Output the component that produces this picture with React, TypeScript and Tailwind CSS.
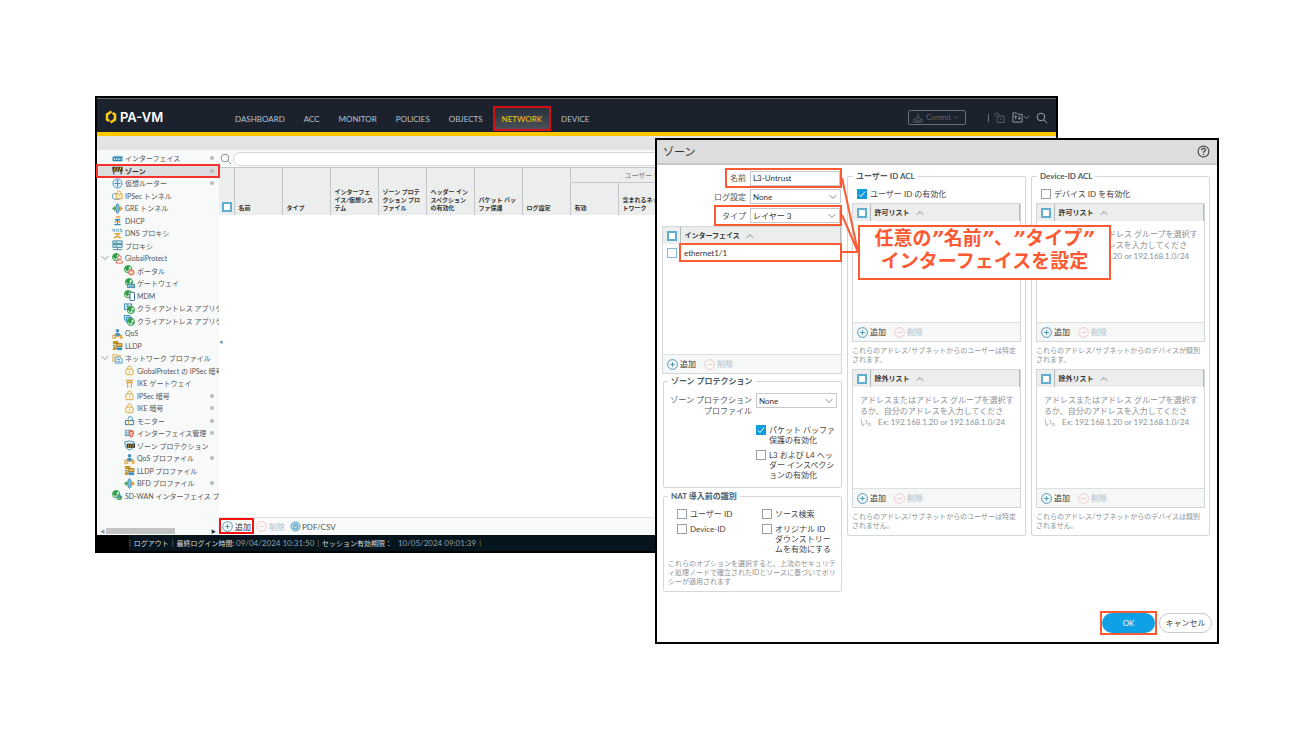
import React from "react";
import { ChevronDown, ChevronUp } from "lucide-react";

const Globe = ({ x = 0, y = 0 }: { x?: number; y?: number }) => (
  <g transform={`translate(${x} ${y})`}>
    <circle cx="4.500" cy="4.500" r="4" fill="#d6efdc" stroke="#2c9a47" strokeWidth="1" />
    <path d="M1 4c0-3 4-4 5.500-2.500L5 3l.5 1.500L3.500 7 2 5z M6 5l2-1c0 2-1 3-2 3.500z" fill="#2c9a47" />
  </g>
);

const Person = ({ color }: { color: string }) => (
  <g fill={color}>
    <circle cx="6" cy="3" r="2" />
    <path d="M2.500 9c0-5 7-5 7 0z" />
  </g>
);

const Padlock = () => (
  <g fill="none" stroke="#dba63a" strokeWidth="1">
    <rect x="2" y="4.500" width="8" height="6" rx="1" fill="#fff6df" />
    <path d="M4 4.500V3a2 2 0 0 1 4 0v1.500" />
    <path d="M6 6.500v2" />
  </g>
);

const icons: Record<string, React.ReactNode> = {
  interface: (
    <g>
      <path d="M2.500 3h8L12 5H1z" fill="#8cc6df" />
      <rect x=".5" y="4" width="11" height="5" rx="1" fill="#2f86b0" />
      <path d="M2 6.500h1.500M4.500 6.500H6M7 6.500h1.500M9.500 6.500h1" stroke="#fff" strokeWidth="1.500" />
    </g>
  ),
  zone: (
    <g>
      <path d="M2 6v4M10 6v4" stroke="#555" strokeWidth="1.500" />
      <rect x=".5" y="2" width="11" height="5" fill="#2b2b2b" />
      <path d="M2 6.500l2-4M5 6.500l2-4M8 6.500l2-4" stroke="#e7b928" strokeWidth="1.200" />
    </g>
  ),
  router: (
    <g fill="none" stroke="#3e8fb3" strokeWidth="1">
      <circle cx="6" cy="6" r="5" fill="#e6f3f9" />
      <path d="M6 2.500v7M2.500 6h7" />
      <path d="M4.800 3.700L6 2.500l1.200 1.200M4.800 8.300L6 9.500l1.200-1.200" />
    </g>
  ),
  ipsec: (
    <g fill="none" strokeWidth="1">
      <path d="M5 4H2L.5 5.500v3L2 10h7" stroke="#4f93b4" />
      <rect x="4.500" y="4.500" width="6.500" height="5" fill="#fff4d7" stroke="#dba63a" />
      <path d="M5.500 4.500V3a2 2 0 0 1 4 0v1.500M7.500 6v1.500" stroke="#dba63a" />
    </g>
  ),
  gre: (
    <g>
      <path d="M0 6l3-3v2h2v2H3v2z" fill="#54a860" />
      <path d="M12 6L9 3v2H7v2h2v2z" fill="#e0a83b" />
      <ellipse cx="6" cy="6" rx="1.800" ry="5.200" fill="#8fc7df" stroke="#2f7f9f" />
    </g>
  ),
  dhcp: (
    <g fill="none" strokeWidth="1.200">
      <path d="M4 2h5M6.500 2v2" stroke="#e1a33a" />
      <path d="M3 5h6M6 5v5M3 8l3-2 3 2M2.500 10.500h7" stroke="#408bb0" />
      <path d="M4 7h4" stroke="#e1a33a" />
    </g>
  ),
  dns: (
    <g fill="none" strokeWidth="1.200">
      <path d="M1 4V1l2 3V1M5 4V1l2 3V1M11 1H9v1.500h2V4H8.500" stroke="#62a5c4" strokeWidth=".8" />
      <path d="M3 5.500l6 5M9 5.500l-6 5M3 6h6M2 10.500h3M7 10.500h3" stroke="#e1a33a" />
    </g>
  ),
  proxy: (
    <g fill="#d9edf4" stroke="#3d87a6" strokeWidth="1">
      <rect x="1" y="1" width="10" height="3" />
      <rect x="1" y="5" width="10" height="3" />
      <path d="M6 8v2.500M1 10.500h10" />
      <path d="M3 2.500h3M3 6.500h3" stroke="#55a867" />
    </g>
  ),
  gp: (
    <g>
      <Globe />
      <g fill="#fff" stroke="#e4604d" strokeWidth="1">
        <circle cx="8" cy="5" r="2" />
        <path d="M4.500 11c0-4.500 7-4.500 7 0z" />
      </g>
    </g>
  ),
  portal: (
    <g>
      <Globe />
      <circle cx="8" cy="8" r="3" fill="#f39a83" stroke="#df6a52" />
      <path d="M6 8h4M8 6v4" stroke="#fff" strokeWidth=".8" />
    </g>
  ),
  gateway: (
    <g>
      <Globe x={1} />
      <rect x="4" y="7" width="7.500" height="3.500" fill="#a9d2e5" stroke="#3d87a6" />
      <path d="M5.500 9h1M7.500 9h1M9.500 9h1" stroke="#1e6788" />
    </g>
  ),
  mdm: (
    <g>
      <Globe />
      <rect x="6.500" y="2.500" width="5" height="9" rx="1" fill="#fff" stroke="#245c86" />
    </g>
  ),
  app1: (
    <g>
      <rect x=".5" y="1" width="8" height="6" fill="#d9edf7" stroke="#3c8fbd" />
      <path d="M2 3.500h5M4 1v6" stroke="#3c8fbd" strokeWidth=".8" />
      <Globe x={3} y={3} />
    </g>
  ),
  app2: (
    <g>
      <rect x=".5" y=".5" width="6" height="5" fill="#d9edf7" stroke="#3c8fbd" />
      <rect x="2.500" y="2.500" width="6" height="5" fill="#9bcbe2" stroke="#3c8fbd" />
      <Globe x={3} y={3} />
    </g>
  ),
  qos: (
    <g>
      <Person color="#4793c1" />
      <path d="M1 8h3v3H1zM5 9.500h2.500M11 8H9v1.500h2V11H8.500" fill="none" stroke="#e1a33a" strokeWidth="1.200" />
    </g>
  ),
  lldp: (
    <g>
      <rect x="1" y="1" width="6" height="3.500" fill="#c8951f" />
      <rect x="4.500" y="4" width="6.500" height="3" fill="#e0b74d" stroke="#8a6c1e" strokeWidth=".8" />
      <path d="M1 6h2v3h3" fill="none" stroke="#8a6c1e" />
      <rect x="5" y="8" width="6" height="3" fill="#3c8fbd" />
      <rect x="1" y="8" width="3" height="3" fill="#c8951f" />
    </g>
  ),
  netprofile: (
    <g fill="#fff" strokeWidth="1">
      <path d="M1 10V1.500h3l1 1h4V5" stroke="#dba63a" fill="#fdf0cf" />
      <path d="M3.500 4.500h5l2.500 2V11H3.500z" stroke="#3c8fbd" />
      <path d="M5 7h4M5 9h4" stroke="#3c8fbd" />
    </g>
  ),
  padlock: <Padlock />,
  ikegw: <path d="M1.500 2.500h9M2.500 5h7M4 2.500V11M8 2.500V11M6 2.500V5" fill="none" stroke="#dba63a" strokeWidth="1.200" />,
  monitor: (
    <g fill="none" strokeWidth="1">
      <path d="M4.500 5V3.500a2.300 2.300 0 0 1 4.500 0V10" stroke="#3c8fbd" />
      <path d="M1.500 6h9v4.500h-9z" stroke="#3a7593" fill="#e6f3f9" />
      <path d="M5 6v4.500" stroke="#dba63a" />
    </g>
  ),
  mgmt: (
    <g>
      <path d="M1 2h7v7H1z" fill="#6eaed0" />
      <path d="M2.500 4h4M2.500 6h4" stroke="#fff" />
      <path d="M5 3.500l3-1.500 3 1.500c.5 4-1 6-3 7-2-1-3.500-3-3-7z" fill="#e2654e" />
      <path d="M6 5h4M6 7h4M8 4v5" stroke="#fff" strokeWidth=".6" />
    </g>
  ),
  shield: (
    <g>
      <path d="M1 2l5-1 5 1c.5 5-2 8-5 9-3-1-5.500-4-5-9z" fill="#e6f3f9" stroke="#3c8fbd" />
      <rect x="3" y="4" width="9" height="4.500" fill="#2b2b2b" />
      <path d="M4.500 8l1-3.500M7 8l1-3.500M9.500 8l1-3.500" stroke="#c9a436" />
    </g>
  ),
  sdwan: (
    <g>
      <Globe />
      <path d="M5 7h5M7.500 5l3 2.500-3 3M5 10h4" fill="none" stroke="#3c8fbd" strokeWidth="1.200" />
      <circle cx="9" cy="9" r="2" fill="#54a860" />
    </g>
  ),
};

type MenuItem = { icon: string; label: string; level?: number; dot?: boolean; open?: boolean; active?: boolean };

const menu: MenuItem[] = [
  { icon: "interface", label: "インターフェイス", dot: true },
  { icon: "zone", label: "ゾーン", dot: true, active: true },
  { icon: "router", label: "仮想ルーター", dot: true },
  { icon: "ipsec", label: "IPSec トンネル" },
  { icon: "gre", label: "GRE トンネル" },
  { icon: "dhcp", label: "DHCP" },
  { icon: "dns", label: "DNS プロキシ" },
  { icon: "proxy", label: "プロキシ" },
  { icon: "gp", label: "GlobalProtect", open: true },
  { icon: "portal", label: "ポータル", level: 2 },
  { icon: "gateway", label: "ゲートウェイ", level: 2 },
  { icon: "mdm", label: "MDM", level: 2 },
  { icon: "app1", label: "クライアントレス アプリケ", level: 2 },
  { icon: "app2", label: "クライアントレス アプリケ", level: 2 },
  { icon: "qos", label: "QoS" },
  { icon: "lldp", label: "LLDP" },
  { icon: "netprofile", label: "ネットワーク プロファイル", open: true },
  { icon: "padlock", label: "GlobalProtect の IPSec 暗号", level: 2 },
  { icon: "ikegw", label: "IKE ゲートウェイ", level: 2 },
  { icon: "padlock", label: "IPSec 暗号", level: 2, dot: true },
  { icon: "padlock", label: "IKE 暗号", level: 2, dot: true },
  { icon: "monitor", label: "モニター", level: 2, dot: true },
  { icon: "mgmt", label: "インターフェイス管理", level: 2, dot: true },
  { icon: "shield", label: "ゾーン プロテクション", level: 2 },
  { icon: "qos", label: "QoS プロファイル", level: 2, dot: true },
  { icon: "lldp", label: "LLDP プロファイル", level: 2 },
  { icon: "gre", label: "BFD プロファイル", level: 2, dot: true },
  { icon: "sdwan", label: "SD-WAN インターフェイス プ" },
];

const tabs = ["DASHBOARD", "ACC", "MONITOR", "POLICIES", "OBJECTS", "NETWORK", "DEVICE"];

const SearchIcon = ({ className }: { className: string }) => (
  <svg viewBox="0 0 12 12" className={className} fill="none" stroke="currentColor">
    <circle cx="5" cy="5" r="3.800" />
    <path d="M8 8l3.200 3.200" />
  </svg>
);

const AddDelete = ({ className = "gap-2" }: { className?: string }) => (
  <div className={`flex items-center ${className}`}>
    <button type="button" className="flex items-center gap-[2px] text-[#333]">
      <svg viewBox="0 0 12 12" className="h-[11px] w-[11px]" fill="none" stroke="#3d8fb5">
        <circle cx="6" cy="6" r="5.300" />
        <path d="M3.500 6h5M6 3.500v5" />
      </svg>
      追加
    </button>
    <button type="button" disabled className="flex items-center gap-[2px] text-[#b5b8ba]">
      <svg viewBox="0 0 12 12" className="h-[11px] w-[11px]" fill="none" stroke="#f2c3c3">
        <circle cx="6" cy="6" r="5.300" />
        <path d="M3.500 6h5" />
      </svg>
      削除
    </button>
  </div>
);

const Check = ({ children, checked = false, className = "" }: { children: React.ReactNode; checked?: boolean; className?: string }) => (
  <label className={`flex items-start gap-[3px] text-[#444] ${className}`}>
    <span className="relative h-[10px] w-[10px] shrink-0">
      <input
        type="checkbox"
        defaultChecked={checked}
        className="peer block h-[10px] w-[10px] appearance-none border border-[#999fa3] bg-white checked:border-[#109bdc] checked:bg-[#109bdc]"
      />
      <svg viewBox="0 0 10 10" className="pointer-events-none absolute inset-0 hidden peer-checked:block" fill="none" stroke="#fff">
        <path d="M2 5.500l2 2 4-5" />
      </svg>
    </span>
    <span>{children}</span>
  </label>
);

const GridCheck = ({ label, light = false }: { label: string; light?: boolean }) => (
  <input
    type="checkbox"
    aria-label={label}
    className={`block h-[10px] w-[10px] appearance-none bg-white ${light ? "border border-[#7fbbd6]" : "border-2 border-[#5fadd0]"}`}
  />
);

const Sidebar = () => (
  <nav className="flex w-[122px] shrink-0 flex-col bg-[#f8f9f9] pt-[2px] text-[7px] leading-[12px] text-[#555]">
    <ul className="flex h-[350px] flex-col">
      {menu.map((item, i) => (
        <li key={i} className={`relative flex flex-1 items-center ${item.active ? "bg-[#dcddde] font-bold text-[#222]" : ""}`}>
          <span className="flex w-[15px] shrink-0 justify-center">
            {item.open && <ChevronDown className="h-3 w-3 shrink-0 text-[#999]" />}
          </span>
          <a href="#" className={`flex min-w-0 flex-1 items-center gap-[2px] ${item.level === 2 ? "pl-3" : ""}`}>
            <svg viewBox="0 0 12 12" className="h-[11px] w-[11px] shrink-0">
              {icons[item.icon]}
            </svg>
            <span className="overflow-hidden whitespace-nowrap">{item.label}</span>
          </a>
          {item.dot && <span className="mr-[5px] h-1 w-1 shrink-0 rounded-full bg-[#bbb]"></span>}
          {item.active && <span className="absolute inset-y-[-1px] -right-px -left-px z-10 border-2 border-[#f5312d]"></span>}
        </li>
      ))}
    </ul>
    <div className="mt-auto mb-px flex h-[6px] items-center justify-between px-[3px] text-[5px] leading-[6px] text-[#333]">
      <span className="text-[#999]">◀</span>
      <span className="mr-auto ml-px h-[6px] w-[69px] bg-[#c4c4c4]"></span>
      <span>▶</span>
    </div>
  </nav>
);

const headCell = "border-l border-[#c3c7c9] px-1 pb-[3px] text-left align-bottom font-bold";

const ZoneTable = () => (
  <table className="w-full table-fixed border-t border-[#c3c7c9] bg-[#eceeee] text-[6px] leading-[8px] text-[#333]">
    <colgroup>
      <col className="w-[15px]" />
      {[...Array(8)].map((_, i) => (
        <col key={i} className="w-12" />
      ))}
      <col className="w-12" />
      <col />
    </colgroup>
    <thead>
      <tr className="h-[15px]">
        <th rowSpan={2} className="pb-[3px] pl-[3px] align-bottom">
          <GridCheck label="すべて選択" />
        </th>
        <th rowSpan={2} className={headCell}>名前</th>
        <th rowSpan={2} className={headCell}>タイプ</th>
        <th rowSpan={2} className={headCell}>インターフェ<br />イス/仮想シス<br />テム</th>
        <th rowSpan={2} className={headCell}>ゾーン プロテ<br />クション プロ<br />ファイル</th>
        <th rowSpan={2} className={headCell}>ヘッダー イン<br />スペクション<br />の有効化</th>
        <th rowSpan={2} className={headCell}>パケット バッ<br />ファ保護</th>
        <th rowSpan={2} className={headCell}>ログ設定</th>
        <th colSpan={3} className="border-b border-l border-[#c3c7c9] pl-[54px] text-left text-[7px] font-normal text-[#777]">
          ユーザー ID
        </th>
      </tr>
      <tr className="h-8">
        <th className={headCell}>有効</th>
        <th className={headCell}>含まれるネッ<br />トワーク</th>
        <th className={headCell}>除外されるネットワーク</th>
      </tr>
    </thead>
  </table>
);

const MainWindow = () => (
  <div className="mr-[161px] border-2 border-black bg-white">
    <header className="flex h-[38px] items-stretch border-t border-b-4 border-t-[#666c72] border-b-[#ffc800] bg-[#1b222e]">
      <div className="flex w-[129px] items-center gap-[3px] pt-[3px] pl-2">
        <svg viewBox="0 0 24 28" className="h-[14px] w-3" fill="none" stroke="#fecb1b" strokeWidth="5">
          <path d="M13 3L4 9v10l5 3" />
          <path d="M11 25l9-6V9l-5-3" />
        </svg>
        <span className="font-[Inter] text-[13px] leading-4 font-semibold text-white">PA-VM</span>
      </div>
      <nav className="flex gap-px pt-[7px] pb-px text-[8px] text-[#b5c3ce]">
        {tabs.map((tab) => (
          <a
            key={tab}
            href="#"
            className={
              tab === "NETWORK"
                ? "flex items-center border-2 border-[#d40f14] bg-linear-to-b from-[#27313c] to-[#4a5057] px-[7px] font-medium text-[#f5bd19]"
                : "flex items-center px-[9px]"
            }
          >
            {tab}
          </a>
        ))}
      </nav>
      <div className="ml-auto flex items-center pt-1 pr-2 text-[#7c848b]">
        <button type="button" className="mr-[22px] flex h-[15px] w-[58px] items-center justify-center gap-[3px] rounded-xs border border-[#687078] text-[7px] text-[#626b74]">
          <svg viewBox="0 0 12 12" className="h-[10px] w-[10px]" fill="none" stroke="currentColor">
            <path d="M6 1v6M4 5l2 2 2-2M1 7.500h3M8 7.500h3v3.500H1V7.500M3 9.500h6" />
          </svg>
          Commit
          <ChevronDown className="-ml-[2px] h-[9px] w-[9px]" />
        </button>
        <span className="mr-[5px] h-2 w-px bg-[#6b737b]"></span>
        <svg viewBox="0 0 12 12" className="mr-[7px] h-[11px] w-[11px] text-[#59636c]" fill="none" stroke="currentColor">
          <path d="M1 5V3a2 2 0 0 1 4 0v2M3.500 4.500h7.500v7H3.500zM7 7v2" />
        </svg>
        <svg viewBox="0 0 12 12" className="h-[11px] w-[11px] text-[#9ca3a8]" fill="none" stroke="currentColor">
          <path d="M1 1h4l1.500 1.500H11V11H1zM4 4v4M2.500 5.500L4 4l1.500 1.500M8 8V4.500M6.500 6.500L8 8l1.500-1.500" />
        </svg>
        <ChevronDown className="mr-[5px] -ml-px h-[9px] w-[9px] text-[#9ca3a8]" />
        <SearchIcon className="h-3 w-3 text-[#9ca3a8]" />
      </div>
    </header>
    <div className="h-[14px] bg-[#e2e4e6]"></div>
    <div className="flex h-[385px]">
      <Sidebar />
      <main className="relative flex min-w-0 flex-1 flex-col">
        <div className="flex h-[17px] items-center gap-px bg-[#f8f9f9] px-px">
          <SearchIcon className="h-3 w-3 shrink-0 text-[#8a9197]" />
          <input aria-label="検索" className="h-[14px] min-w-0 flex-1 rounded-full border border-[#d4d8da] bg-white px-2 text-[8px]" />
        </div>
        <ZoneTable />
        <button type="button" aria-label="折りたたむ" className="absolute top-[190px] left-0 text-[4px] text-[#888]">◀</button>
        <div className="mt-auto flex h-[18px] items-center gap-[5px] border-t border-[#e0e3e4] bg-[#f9fbfb] pl-[3px] text-[8px] leading-[10px] text-[#555]">
          <div className="relative">
            <AddDelete className="gap-[5px]" />
            <span className="absolute -top-[3px] -left-[3px] h-4 w-[35px] border-2 border-[#f5110e]"></span>
          </div>
          <button type="button" className="flex items-center gap-px">
            <svg viewBox="0 0 12 12" className="h-[11px] w-[11px]" fill="none" stroke="#4f9fc4">
              <circle cx="6" cy="6" r="5" fill="#b8dcec" />
              <path d="M4 3.500h4v5H4zM5 5.500h2" />
            </svg>
            PDF/CSV
          </button>
        </div>
      </main>
    </div>
    <footer className="flex h-4 bg-black pl-8 text-[7px] leading-4 text-[#d8dcdf]">
      <div className="flex flex-1 gap-[3px] bg-[#06141d] whitespace-pre">
        <span className="text-[#7f8990]">|</span>
        <a href="#">ログアウト</a>
        <span className="text-[#7f8990]">|</span>
        <span>
          最終ログイン時間: <span className="text-[8px] text-[#94a0a8]">09/04/2024 10:31:50</span>
        </span>
        <span className="text-[#7f8990]">|</span>
        <span className="flex gap-1">
          セッション有効期限： <span className="text-[8px] text-[#94a0a8]">10/05/2024 09:01:39</span>
        </span>
        <span className="text-[#7f8990]">|</span>
      </div>
    </footer>
  </div>
);

const Select = ({ id, value, className = "" }: { id: string; value: string; className?: string }) => (
  <div className={`relative ${className}`}>
    <select id={id} className="block h-[15px] w-full appearance-none border border-[#c6cacc] bg-white px-[2px] text-[8px] leading-[10px] text-[#333]">
      <option>{value}</option>
    </select>
    <ChevronDown className="pointer-events-none absolute top-[2px] right-[2px] h-3 w-3 text-[#888]" />
  </div>
);

type ListPanelProps = { title: string; height: string; children?: React.ReactNode };

const ListPanel = ({ title, height, children }: ListPanelProps) => (
  <div className={`flex flex-col border border-[#d3d7d9] ${height}`}>
    <table className="w-full text-[#333]">
      <thead>
        <tr className="h-[17px] bg-[#eceeee]">
          <th className="w-[17px] border-r border-[#b3bbbf] pl-1">
            <GridCheck label={`${title} すべて選択`} />
          </th>
          <th className="border-r border-[#b3bbbf] pl-1 text-left text-[7px] leading-[9px] font-bold">
            <span className="flex items-center gap-1">
              {title}
              <ChevronUp className="h-3 w-3 text-[#888]" />
            </span>
          </th>
        </tr>
      </thead>
      {title === "インターフェイス" && (
        <tbody>
          <tr className="h-[18px]">
            <td className="pl-1">
              <GridCheck label="ethernet1/1" light />
            </td>
            <td className="relative pl-1">
              ethernet1/1
              <span className="absolute -top-px -right-px bottom-0 -left-px border-2 border-[#fb5a32]"></span>
            </td>
          </tr>
        </tbody>
      )}
    </table>
    {children}
    <AddDelete className="mt-auto h-[19px] gap-2 border-t border-[#dde0e1] bg-[#f6f8f8] pl-1" />
  </div>
);

const AclHint = () => (
  <p className="pt-2 pl-[7px] text-[8px] leading-[11px] whitespace-nowrap text-[#8d9295]">
    アドレスまたはアドレス グループを選択す<br />るか、自分のアドレスを入力してくださ<br />い。 Ex: 192.168.1.20 or 192.168.1.0/24
  </p>
);

type AclProps = { title: string; enable: string; checked?: boolean; allow: string; deny: string };

const AclFieldset = ({ title, enable, checked, allow, deny }: AclProps) => (
  <fieldset className="min-w-0 flex-1 self-start rounded-xs border border-[#d3d7d9] px-1 pb-[5px]">
    <legend className="ml-[1px] px-[3px] font-bold text-[#4c5c66]">{title}</legend>
    <Check checked={checked} className="mt-2 mb-1 ml-[5px]">{enable}</Check>
    <ListPanel title="許可リスト" height="h-[139px]">
      {!checked && <AclHint />}
    </ListPanel>
    <p className="mt-1 mb-[5px] text-[7px] leading-[9px] text-[#8d9295]">{allow}<br />されます。</p>
    <ListPanel title="除外リスト" height="h-[139px]">
      <AclHint />
    </ListPanel>
    <p className="mt-1 text-[7px] leading-[9px] text-[#8d9295]">{deny}<br />されません。</p>
  </fieldset>
);

const ZoneDialog = () => (
  <div role="dialog" aria-label="ゾーン" className="absolute top-[42px] right-0 flex h-[506px] w-[564px] flex-col border-2 border-black bg-white text-[8px] leading-[10px]">
    <div className="flex h-[25px] items-center justify-between border-b-2 border-[#c5c9cb] bg-[#dcddde] pr-[7px] pl-[6px]">
      <h2 className="text-[11px] leading-4 text-[#333]">ゾーン</h2>
      <button type="button" aria-label="ヘルプ">
        <svg viewBox="0 0 12 12" className="h-[13px] w-[13px]" fill="none" stroke="#444">
          <circle cx="6" cy="6" r="5" />
          <path d="M4.300 4.800c0-2.300 3.400-2.300 3.400-.2C7.700 5.800 6 5.800 6 7.200M6 8v1.200" strokeWidth="1.200" />
        </svg>
      </button>
    </div>
    <div className="flex gap-[5px] pt-[6px] pr-[7px] pl-[5px]">
      <div className="w-[180px] shrink-0">
        <div className="-mt-[3px] flex flex-col text-[#555]">
          <div className="flex h-5 items-center justify-end self-end border-2 border-[#fb5a32] pl-[3px]">
            <label htmlFor="zone-name" className="mr-1">名前</label>
            <input id="zone-name" defaultValue="L3-Untrust" className="h-[15px] w-[90px] border border-[#c6cacc] px-[2px] text-[#333]" />
          </div>
          <div className="flex h-[17px] items-center justify-end pr-px">
            <label htmlFor="log-setting" className="mr-1">ログ設定</label>
            <Select id="log-setting" value="None" className="w-[91px]" />
          </div>
          <div className="flex h-[21px] items-center justify-end self-end border-2 border-[#fb5a32] pl-[6px]">
            <label htmlFor="zone-type" className="mr-1">タイプ</label>
            <Select id="zone-type" value="レイヤー 3" className="w-[90px]" />
          </div>
        </div>
        <ListPanel title="インターフェイス" height="h-[148px]" />
        <fieldset className="mt-[2px] ml-px h-[112px] rounded-xs border border-[#d3d7d9]">
          <legend className="ml-1 px-[3px] font-bold text-[#4c5c66]">ゾーン プロテクション</legend>
          <div className="mt-[7px] flex gap-1 pr-1 text-[#555]">
            <label htmlFor="protection" className="flex-1 pt-[2px] text-right leading-[11px] whitespace-nowrap">
              ゾーン プロテクション<br />プロファイル
            </label>
            <Select id="protection" value="None" className="w-[81px]" />
          </div>
          <Check checked className="mt-2 ml-[92px] whitespace-nowrap">パケット バッファ<br />保護の有効化</Check>
          <Check className="mt-[5px] ml-[92px] whitespace-nowrap">L3 および L4 ヘッ<br />ダー インスペクシ<br />ョンの有効化</Check>
        </fieldset>
        <fieldset className="mt-[3px] ml-px rounded-xs border border-[#d3d7d9] px-1 pb-[5px]">
          <legend className="px-[3px] font-bold text-[#4c5c66]">NAT 導入前の識別</legend>
          <div className="mt-2 grid grid-cols-[85px_1fr] gap-y-[5px] pl-[9px]">
            <Check>ユーザー ID</Check>
            <Check>ソース検索</Check>
            <Check>Device-ID</Check>
            <Check className="whitespace-nowrap">オリジナル ID<br />ダウンストリー<br />ムを有効にする</Check>
          </div>
          <p className="mt-[5px] text-[7px] leading-[9px] whitespace-nowrap text-[#8d9295]">
            これらのオプションを選択すると、上流のセキュリテ<br />ィ処理ノードで確立されたIDとソースに基づいてポリ<br />シーが適用されます
          </p>
        </fieldset>
      </div>
      <AclFieldset
        title="ユーザー ID ACL"
        enable="ユーザー ID の有効化"
        checked
        allow="これらのアドレス/サブネットからのユーザーは特定"
        deny="これらのアドレス/サブネットからのユーザーは特定"
      />
      <AclFieldset
        title="Device-ID ACL"
        enable="デバイス ID を有効化"
        allow="これらのアドレス/サブネットからのデバイスが識別"
        deny="これらのアドレス/サブネットからのデバイスは識別"
      />
    </div>
    <div className="mt-auto mb-[7px] flex items-center justify-end gap-[2px] pr-[5px]">
      <div className="border-2 border-[#fb5a32]">
        <button type="button" className="block h-5 w-[53px] rounded-full bg-[#0fa0e6] text-white">OK</button>
      </div>
      <button type="button" className="h-5 w-[53px] rounded-full border border-[#c6cacc] bg-white text-[#444]">キャンセル</button>
    </div>

    {/* callout */}
    <svg className="absolute top-8 left-[185px] h-[90px] w-4" viewBox="0 0 16 90" fill="none" stroke="#fb5a32" strokeWidth="2">
      <path d="M0 6l16 74M0 43l16 37M0 80h16" />
    </svg>
    <div className="absolute top-[85px] left-[201px] h-[55px] w-[253px] border-2 border-[#fb5a32] bg-white text-center font-['DejaVu_Sans','Noto_Sans_CJK_JP',sans-serif] text-[19px] leading-[23px] font-bold whitespace-nowrap text-[#fb5a32] [text-spacing-trim:space-all]">
      任意の<i>”</i>名前<i>”</i>、<i>”</i>タイプ<i>”</i>
      <br />
      インターフェイスを設定
    </div>
  </div>
);

const App = () => {
  return (
    <div lang="ja" className="bg-white pt-24 pr-24 pb-24 pl-[95px] font-[Lato,'Noto_Sans_CJK_JP',sans-serif]">
      <div className="relative">
        <MainWindow />
        <ZoneDialog />
      </div>
    </div>
  );
};

export default App;
